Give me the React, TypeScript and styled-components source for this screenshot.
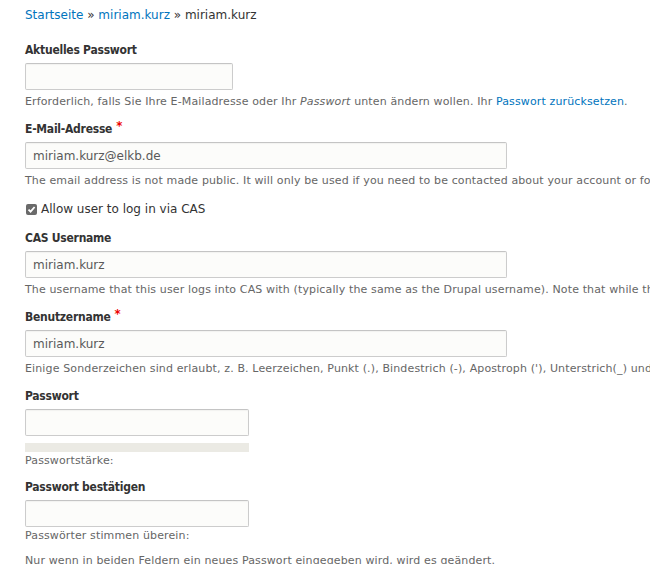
import React from "react";
import styled, { createGlobalStyle } from "styled-components";

const Global = createGlobalStyle`
  html, body { margin: 0; padding: 0; background: #fff; }
  body {
    font-family: "DejaVu Sans", Verdana, sans-serif;
    color: #333;
    overflow: hidden;
  }
`;

const Page = styled.div`
  padding: 7px 0 0 25px;
  width: 625px;
  overflow: hidden;
`;

const Breadcrumb = styled.nav`
  font-size: 12px;
  line-height: 16px;
  color: #333;
  margin-bottom: 18px;
`;

const Link = styled.a`
  color: #0074bd;
  text-decoration: none;
`;

const Item = styled.div<{ $gap?: number }>`
  margin-bottom: ${(p) => p.$gap ?? 10}px;
`;

const Label = styled.label`
  display: block;
  font-family: "DejaVu Sans Condensed", "DejaVu Sans", sans-serif;
  font-weight: bold;
  font-size: 12px;
  letter-spacing: -0.25px;
  line-height: 18px;
  margin-bottom: 4px;
  color: #333;
`;

const Req = styled.span`
  color: #e00;
  margin-left: 4px;
  font-size: 13px;
  vertical-align: top;
  position: relative;
  top: -3px;
`;

const Input = styled.input<{ $w: number }>`
  display: block;
  box-sizing: border-box;
  width: ${(p) => p.$w}px;
  height: 27px;
  padding: 0 7px;
  border: 1px solid #ccc;
  border-top-color: #c4c4c4;
  border-radius: 2px;
  background: #fcfcfa;
  font-family: inherit;
  font-size: 12px;
  color: #595959;
  box-shadow: inset 0 1px 1px rgba(0, 0, 0, 0.04);
  outline: none;
`;

const Desc = styled.div<{ $top?: number }>`
  font-size: 11px;
  line-height: 16px;
  color: #666;
  margin-top: ${(p) => p.$top ?? 4}px;
  white-space: nowrap;
  letter-spacing: 0.13px;
`;

const CheckRow = styled.label`
  display: flex;
  align-items: center;
  gap: 4px;
  font-size: 12px;
  line-height: 16px;
  color: #333;
  margin: 12px 0 12px 1px;
`;

const Box = styled.span`
  width: 11px;
  height: 11px;
  border-radius: 2px;
  background: #6a6a6a;
  display: inline-flex;
  align-items: center;
  justify-content: center;
`;

const Strength = styled.div`
  width: 224px;
  height: 9px;
  background: #ebeae4;
  margin-top: 7px;
`;

export default function App() {
  return (
    <>
      <Global />
      <Page>
        <Breadcrumb>
          <Link href="#">Startseite</Link> » <Link href="#">miriam.kurz</Link> » miriam.kurz
        </Breadcrumb>

        <Item>
          <Label>Aktuelles Passwort</Label>
          <Input $w={208} type="password" />
          <Desc>
            Erforderlich, falls Sie Ihre E-Mailadresse oder Ihr <em>Passwort</em> unten ändern wollen. Ihr{" "}
            <Link href="#">Passwort zurücksetzen</Link>.
          </Desc>
        </Item>

        <Item>
          <Label>
            E-Mail-Adresse<Req>*</Req>
          </Label>
          <Input $w={482} defaultValue="miriam.kurz@elkb.de" />
          <Desc>
            The email address is not made public. It will only be used if you need to be contacted about your account or for opted-in notifications.
          </Desc>
        </Item>

        <CheckRow>
          <Box>
            <svg width="9" height="9" viewBox="0 0 9 9">
              <path d="M1.5 4.6 L3.6 6.7 L7.6 2" fill="none" stroke="#fff" strokeWidth="1.8" />
            </svg>
          </Box>
          Allow user to log in via CAS
        </CheckRow>

        <Item>
          <Label>CAS Username</Label>
          <Input $w={482} defaultValue="miriam.kurz" />
          <Desc>
            The username that this user logs into CAS with (typically the same as the Drupal username). Note that while the username must be unique.
          </Desc>
        </Item>

        <Item>
          <Label>
            Benutzername<Req>*</Req>
          </Label>
          <Input $w={482} defaultValue="miriam.kurz" />
          <Desc>
            Einige Sonderzeichen sind erlaubt, z. B. Leerzeichen, Punkt (.), Bindestrich (-), Apostroph ('), Unterstrich(_) und das @-Zeichen.
          </Desc>
        </Item>

        <Item $gap={9}>
          <Label>Passwort</Label>
          <Input $w={224} type="password" />
          <Strength />
          <Desc $top={1}>Passwortstärke:</Desc>
        </Item>

        <Item>
          <Label>Passwort bestätigen</Label>
          <Input $w={224} type="password" />
          <Desc $top={1}>Passwörter stimmen überein:</Desc>
          <Desc $top={9}>Nur wenn in beiden Feldern ein neues Passwort eingegeben wird, wird es geändert.</Desc>
        </Item>
      </Page>
    </>
  );
}
